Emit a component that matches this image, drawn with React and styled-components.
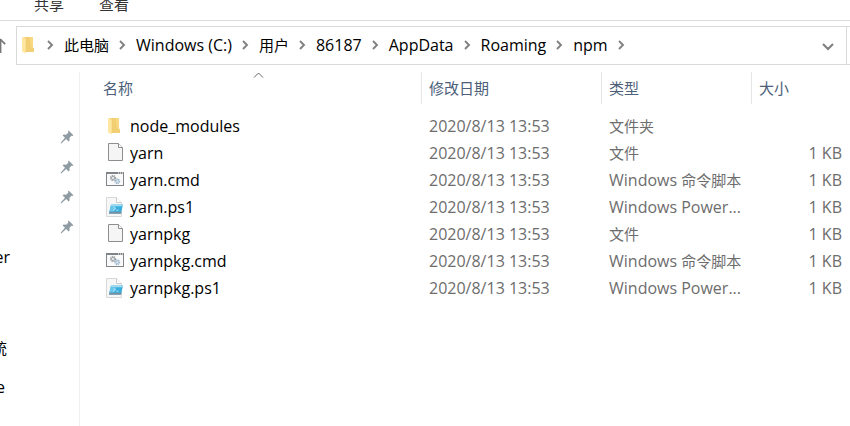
import React, { useState } from 'react'
import styled, { createGlobalStyle } from 'styled-components'

const crumbs = ['此电脑', 'Windows (C:)', '用户', '86187', 'AppData', 'Roaming', 'npm']

const files = [
  { name: 'node_modules', icon: 'folder', date: '2020/8/13 13:53', kind: '文件夹', size: '' },
  { name: 'yarn', icon: 'file', date: '2020/8/13 13:53', kind: '文件', size: '1 KB' },
  { name: 'yarn.cmd', icon: 'cmd', date: '2020/8/13 13:53', app: 'Windows ', kind: '命令脚本', size: '1 KB' },
  { name: 'yarn.ps1', icon: 'ps1', date: '2020/8/13 13:53', app: 'Windows Power...', size: '1 KB' },
  { name: 'yarnpkg', icon: 'file', date: '2020/8/13 13:53', kind: '文件', size: '1 KB' },
  { name: 'yarnpkg.cmd', icon: 'cmd', date: '2020/8/13 13:53', app: 'Windows ', kind: '命令脚本', size: '1 KB' },
  { name: 'yarnpkg.ps1', icon: 'ps1', date: '2020/8/13 13:53', app: 'Windows Power...', size: '1 KB' },
]

const FolderIcon = () => (
  <svg width="17" height="18" viewBox="0 0 17 18" aria-hidden="true">
    <path d="M4 1H13V11.5L14 12.5V16H4Z" fill="#f3cf73" />
    <path d="M9.5 1H13V11.5H11Z" fill="#f8d981" />
    <path d="M2 1H4L6 3.5V17.5L2 15.5Z" fill="#ffe7a2" />
    <path d="M6 3.5V16" stroke="#edc568" strokeWidth="0.5" />
  </svg>
)

const FileIcon = () => (
  <svg width="18" height="20" viewBox="0 0 18 20" aria-hidden="true">
    <path d="M2.5 0.5H12.5L16.5 4.5V17.5H2.5Z" fill="#f5f5f5" stroke="#8e8e8e" />
    <path d="M12.5 0.5V4.5H16.5" fill="#fff" stroke="#8e8e8e" />
  </svg>
)

const CmdIcon = () => (
  <svg width="18" height="15" viewBox="0 0 18 15" aria-hidden="true">
    <rect x="0.5" y="0.5" width="17" height="13" fill="#fafafa" stroke="#808488" />
    <path d="M0 1H18" stroke="#808488" strokeWidth="2" />
    <path d="M12 1H13M14 1H15M16 1H17" stroke="#fff" />
    <circle cx="7" cy="6" r="2.4" fill="none" stroke="#a0a4a8" strokeWidth="1.5" strokeDasharray="1.2 0.6" />
    <circle cx="7" cy="6" r="1.6" fill="#e8ecef" stroke="#8b9095" strokeWidth="0.7" />
    <circle cx="11.3" cy="9.3" r="2.2" fill="none" stroke="#9db9cd" strokeWidth="1.5" strokeDasharray="1.1 0.6" />
    <circle cx="11.3" cy="9.3" r="1.4" fill="#e3eff8" stroke="#8fa9bd" strokeWidth="0.7" />
  </svg>
)

const Ps1Icon = () => (
  <svg width="18" height="20" viewBox="0 0 18 20" aria-hidden="true">
    <path d="M0.5 0.5H10.5L15.5 5.5V19.5H0.5Z" fill="#f7f7f7" stroke="#d8d8d8" />
    <path d="M10.5 0.5V5.5H15.5" fill="#fff" stroke="#cacaca" />
    <path d="M5 7.5H17L15 16.5H3Z" fill="#36aede" />
    <path d="M5 7.5H17L16.6 9.3H4.6Z" fill="#a4dbf1" />
    <path d="M4.6 9.3H10L8 14.5H3.4Z" fill="#69c5e9" />
    <path d="M3.4 14.7H15.4L15 16.8H3Z" fill="#7892a1" />
    <path d="M7.5 10.2L9.7 11.6L7 13.4M10.2 13.2H12.6" fill="none" stroke="#c9ecf9" strokeWidth="0.8" />
  </svg>
)

const icons = { folder: FolderIcon, file: FileIcon, cmd: CmdIcon, ps1: Ps1Icon }

const Chevron = () => (
  <svg width="7" height="10" viewBox="0 0 7 10" aria-hidden="true">
    <path d="M1 1L5 5L1 9" fill="none" stroke="#808080" strokeWidth="1.9" />
  </svg>
)

const PinIcon = () => (
  <svg width="14" height="14" viewBox="0 0 14 14" aria-hidden="true">
    <path d="M8.6 0.6L13.4 5.2L12.3 6L11.4 5.8L9.4 8.1L9.6 10.6L8.6 11.4L6.2 9L1.2 13.4L0.6 12.8L5 7.8L2.6 5.4L3.6 4.4L6.2 4.7L8.4 2.6L8 1.4Z" fill="#8f9ba3" />
  </svg>
)

const App = () => {
  const [ascending, setAscending] = useState(true)

  const rows = ascending ? files : [...files].reverse()

  return (
    <>
      <GlobalStyle />
      <Explorer>
        <Ribbon>
          <RibbonTab type="button">共享</RibbonTab>
          <RibbonTab type="button">查看</RibbonTab>
        </Ribbon>
        <AddressRow>
          <UpButton type="button" aria-label="向上">
            <svg width="6" height="16" viewBox="0 0 6 16" aria-hidden="true">
              <path d="M0.5 1V15" stroke="#777" strokeWidth="1.8" />
              <path d="M0 1L5.2 6.2" stroke="#777" strokeWidth="1.7" />
            </svg>
          </UpButton>
          <AddressBox aria-label="地址">
            <FolderIcon />
            <ChevronSlot>
              <Chevron />
            </ChevronSlot>
            {crumbs.map((crumb) => (
              <React.Fragment key={crumb}>
                <Crumb type="button" $cjk={/[\u4e00-\u9fff]/.test(crumb)}>
                  {crumb}
                </Crumb>
                <ChevronSlot>
                  <Chevron />
                </ChevronSlot>
              </React.Fragment>
            ))}
            <HistoryButton type="button" aria-label="以前的位置">
              <svg width="12" height="8" viewBox="0 0 12 8" aria-hidden="true">
                <path d="M1 1L6 6L11 1" fill="none" stroke="#808080" strokeWidth="2.1" />
              </svg>
            </HistoryButton>
          </AddressBox>
          <RefreshButton type="button" aria-label="刷新" />
        </AddressRow>
        <Body>
          <Sidebar>
            <PinnedList>
              {[1, 2, 3, 4].map((pin) => (
                <PinnedItem key={pin}>
                  <PinIcon />
                </PinnedItem>
              ))}
            </PinnedList>
            <FolderLabel $visible="10px">er</FolderLabel>
            <DriveList>
              <FolderLabel $visible="7px" $cjk>
                统
              </FolderLabel>
              <FolderLabel $visible="5px">e</FolderLabel>
            </DriveList>
          </Sidebar>
          <FileTable>
            <thead>
              <tr>
                <HeadCell aria-sort={ascending ? 'ascending' : 'descending'}>
                  <SortMark width="11" height="6" viewBox="0 0 11 6" $flip={!ascending} aria-hidden="true">
                    <path d="M1 5.5L5.5 1L10 5.5" fill="none" stroke="#666" />
                  </SortMark>
                  <HeadButton type="button" $first onClick={() => setAscending(!ascending)}>
                    名称
                  </HeadButton>
                </HeadCell>
                <HeadCell $width="180px">
                  <HeadButton type="button">修改日期</HeadButton>
                </HeadCell>
                <HeadCell $width="150px">
                  <HeadButton type="button">类型</HeadButton>
                </HeadCell>
                <HeadCell $width="99px">
                  <HeadButton type="button">大小</HeadButton>
                </HeadCell>
              </tr>
            </thead>
            <tbody>
              {rows.map((file) => {
                const Icon = icons[file.icon]
                return (
                  <tr key={file.name}>
                    <Cell>
                      <FileName>
                        <IconSlot>
                          <Icon />
                        </IconSlot>
                        {file.name}
                      </FileName>
                    </Cell>
                    <Cell>{file.date}</Cell>
                    <Cell>
                      {file.app}
                      {file.kind && <Chinese>{file.kind}</Chinese>}
                    </Cell>
                    <Cell $right>{file.size}</Cell>
                  </tr>
                )
              })}
            </tbody>
          </FileTable>
        </Body>
      </Explorer>
    </>
  )
}

const GlobalStyle = createGlobalStyle`
  * {
    box-sizing: border-box;
  }
  body {
    margin: 0;
    background: #fff;
    color: #000;
    font-family: 'Open Sans', 'Noto Sans CJK SC', sans-serif;
    font-size: 16px;
  }
  button {
    padding: 0;
    border: 0;
    background: none;
    color: inherit;
    font: inherit;
  }
  svg {
    display: block;
    flex-shrink: 0;
  }
`

const Explorer = styled.div`
  display: flex;
  flex-direction: column;
  min-height: 100vh;
  overflow: hidden;
`

const Ribbon = styled.div`
  display: flex;
  align-items: flex-start;
  gap: 35px;
  height: 21px;
  padding-left: 34px;
  border-bottom: 1px solid #dadbdc;
`

const RibbonTab = styled.button`
  color: #333;
  font-size: 15px;
  line-height: 8px;
`

const AddressRow = styled.div`
  display: flex;
  height: 39px;
  margin-top: 5px;
`

const UpButton = styled.button`
  display: flex;
  align-items: center;
  width: 16px;
`

const AddressBox = styled.nav`
  display: flex;
  flex: 1;
  align-items: center;
  padding: 0 0 2px 3px;
  border: 1px solid #d9d9d9;
`

const ChevronSlot = styled.span`
  padding: 0 10px;
`

const Crumb = styled.button`
  font-size: ${({ $cjk }) => ($cjk ? '15px' : '16px')};
  line-height: 22px;
  white-space: nowrap;
`

const HistoryButton = styled.button`
  display: flex;
  margin-left: auto;
  padding: 4px 12px 0;
`

const RefreshButton = styled.button`
  width: 3px;
  border: solid #d9d9d9;
  border-width: 1px 0;
`

const Body = styled.div`
  display: flex;
  flex: 1;
  align-items: stretch;
  margin-top: 7px;
`

const Sidebar = styled.aside`
  flex: 0 0 80px;
  padding-top: 50px;
  border-right: 1px solid #f0f0f0;
`

const PinnedList = styled.ul`
  margin: 0;
  padding: 0;
  list-style: none;
`

const PinnedItem = styled.li`
  display: flex;
  align-items: center;
  justify-content: flex-end;
  height: 30px;
  padding-right: 5px;
`

const FolderLabel = styled.div`
  display: flex;
  align-items: center;
  justify-content: flex-end;
  width: ${({ $visible }) => $visible};
  height: 30px;
  overflow: hidden;
  font-size: ${({ $cjk }) => ($cjk ? '15px' : '16px')};
`

const DriveList = styled.div`
  display: flex;
  flex-direction: column;
  gap: 10px;
  padding-top: 60px;
`

const FileTable = styled.table`
  flex: 1;
  align-self: flex-start;
  table-layout: fixed;
  width: 100%;
  border-collapse: separate;
  border-spacing: 0;

  thead::after {
    content: '';
    display: block;
    height: 9px;
  }
`

const HeadCell = styled.th`
  position: relative;
  width: ${({ $width }) => $width || 'auto'};
  height: 32px;
  padding: 0;
  border-left: ${({ $width }) => ($width ? '1px solid #e5e5e5' : '0')};
  text-align: left;
  font-weight: 400;
`

const SortMark = styled.svg`
  position: absolute;
  top: 0;
  left: calc(50% + 2px);
  transform: ${({ $flip }) => ($flip ? 'rotate(180deg)' : 'none')};
`

const HeadButton = styled.button`
  display: block;
  width: 100%;
  padding-left: ${({ $first }) => ($first ? '23px' : '7px')};
  color: #4c607a;
  font-size: 15px;
  line-height: 32px;
  text-align: left;
`

const Cell = styled.td`
  height: 27px;
  padding: 0 8px;
  overflow: hidden;
  color: #6d6d6d;
  line-height: 27px;
  text-align: ${({ $right }) => ($right ? 'right' : 'left')};
  white-space: nowrap;
`

const FileName = styled.div`
  display: flex;
  align-items: center;
  height: 27px;
  padding-left: 18px;
  color: #000;
`

const IconSlot = styled.span`
  width: 24px;
  padding-bottom: 2px;
`

const Chinese = styled.span`
  font-size: 15px;
  line-height: 1;
`

export default App
